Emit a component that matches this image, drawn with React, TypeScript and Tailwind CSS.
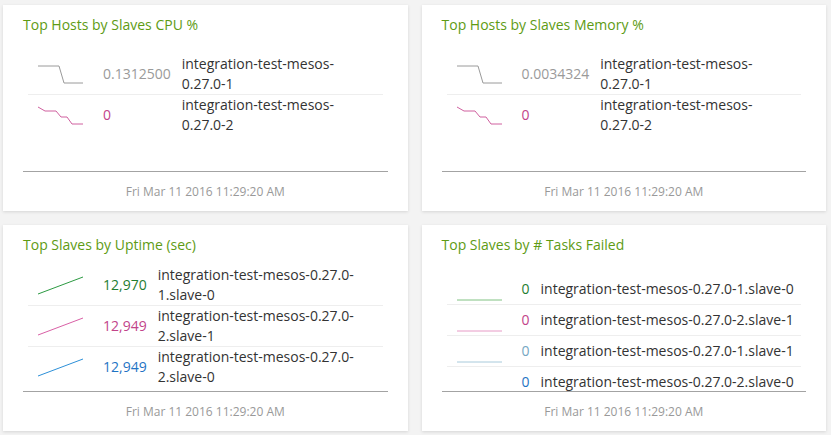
type Row = {
  spark: string;
  sparkColor: string;
  value: string;
  valueColor: string;
  name: string;
};

type Panel = {
  title: string;
  rows: Row[];
  align: string;
  listClass: string;
};

const stepDown = "0,2 21,2 26,19 45,19";
const pinkSteps = "0,2 7,6 18,6 23,12 29,12 34,19 45,19";
const rising = "0,19 45,2";
const flat = "0,21 45,21";

const panels: Panel[] = [
  {
    title: "Top Hosts by Slaves CPU %",
    align: "text-left",
    listClass: "pt-[5px]",
    rows: [
      { spark: stepDown, sparkColor: "#9a9a9a", value: "0.1312500", valueColor: "text-[#9a9a9a]", name: "integration-test-mesos-0.27.0-1" },
      { spark: pinkSteps, sparkColor: "#d0609f", value: "0", valueColor: "text-[#c2448a]", name: "integration-test-mesos-0.27.0-2" },
    ],
  },
  {
    title: "Top Hosts by Slaves Memory %",
    align: "text-left",
    listClass: "pt-[5px]",
    rows: [
      { spark: stepDown, sparkColor: "#9a9a9a", value: "0.0034324", valueColor: "text-[#9a9a9a]", name: "integration-test-mesos-0.27.0-1" },
      { spark: pinkSteps, sparkColor: "#d0609f", value: "0", valueColor: "text-[#c2448a]", name: "integration-test-mesos-0.27.0-2" },
    ],
  },
  {
    title: "Top Slaves by Uptime (sec)",
    align: "text-right",
    listClass: "-mt-[4px]",
    rows: [
      { spark: rising, sparkColor: "#2c9a42", value: "12,970", valueColor: "text-[#1f7d31]", name: "integration-test-mesos-0.27.0-1.slave-0" },
      { spark: rising, sparkColor: "#d960a6", value: "12,949", valueColor: "text-[#c2448a]", name: "integration-test-mesos-0.27.0-2.slave-1" },
      { spark: rising, sparkColor: "#2d90d8", value: "12,949", valueColor: "text-[#1f74c4]", name: "integration-test-mesos-0.27.0-2.slave-0" },
    ],
  },
  {
    title: "Top Slaves by # Tasks Failed",
    align: "text-right",
    listClass: "pt-[5px]",
    rows: [
      { spark: flat, sparkColor: "#80c282", value: "0", valueColor: "text-[#1f7d31]", name: "integration-test-mesos-0.27.0-1.slave-0" },
      { spark: flat, sparkColor: "#e79ac6", value: "0", valueColor: "text-[#c2448a]", name: "integration-test-mesos-0.27.0-2.slave-1" },
      { spark: flat, sparkColor: "#a8cadb", value: "0", valueColor: "text-[#74a6c2]", name: "integration-test-mesos-0.27.0-1.slave-1" },
      { spark: flat, sparkColor: "#4f9ee0", value: "0", valueColor: "text-[#1f74c4]", name: "integration-test-mesos-0.27.0-2.slave-0" },
    ],
  },
];

const Card = ({ panel }: { panel: Panel }) => (
  <div className="bg-white h-[206px] px-[20px] pt-[10px] shadow-[0_1px_3px_rgba(0,0,0,0.12)] flex flex-col">
    <h3 className="text-[14px] leading-[20px] text-[#5e9b14]">{panel.title}</h3>
    <div className="mt-[14px] h-[123px] shrink-0 overflow-hidden border-b border-[#a3a3a3]">
      <div className={`px-[5px] ${panel.listClass}`}>
        <table className="w-full border-separate border-spacing-0">
          <tbody>
            {panel.rows.map((row, i) => {
              const line = i > 0 ? "border-t border-[#eeeeee]" : "";
              return (
                <tr key={i}>
                  <td className={`box-content pl-[10px] h-[30px] align-middle whitespace-nowrap ${line}`}>
                    <svg width="45" height="20" viewBox="0 0 45 20" className="block overflow-visible">
                      <polyline points={row.spark} fill="none" stroke={row.sparkColor} strokeWidth="1" />
                    </svg>
                  </td>
                  <td className={`pl-[20px] align-middle whitespace-nowrap text-[14px] leading-[20px] ${panel.align} ${row.valueColor} ${line}`}>
                    {row.value}
                  </td>
                  <td className={`pl-[11px] pr-[5px] w-full align-middle text-[14px] leading-[20px] text-[#333333] ${line}`}>
                    {row.name}
                  </td>
                </tr>
              );
            })}
          </tbody>
        </table>
      </div>
    </div>
    <div className="pt-[10px] text-center text-[12px] leading-[20px] text-[#999999]">Fri Mar 11 2016 11:29:20 AM</div>
  </div>
);

export default function App() {
  return (
    <div className="w-[831px] h-[435px] bg-[#f3f3f3] pl-[3px] pr-[5px] pt-[5px] font-['Open_Sans',sans-serif]">
      <div className="grid grid-cols-2 gap-x-[14px] gap-y-[14px]">
        {panels.map((p) => (
          <Card key={p.title} panel={p} />
        ))}
      </div>
    </div>
  );
}
